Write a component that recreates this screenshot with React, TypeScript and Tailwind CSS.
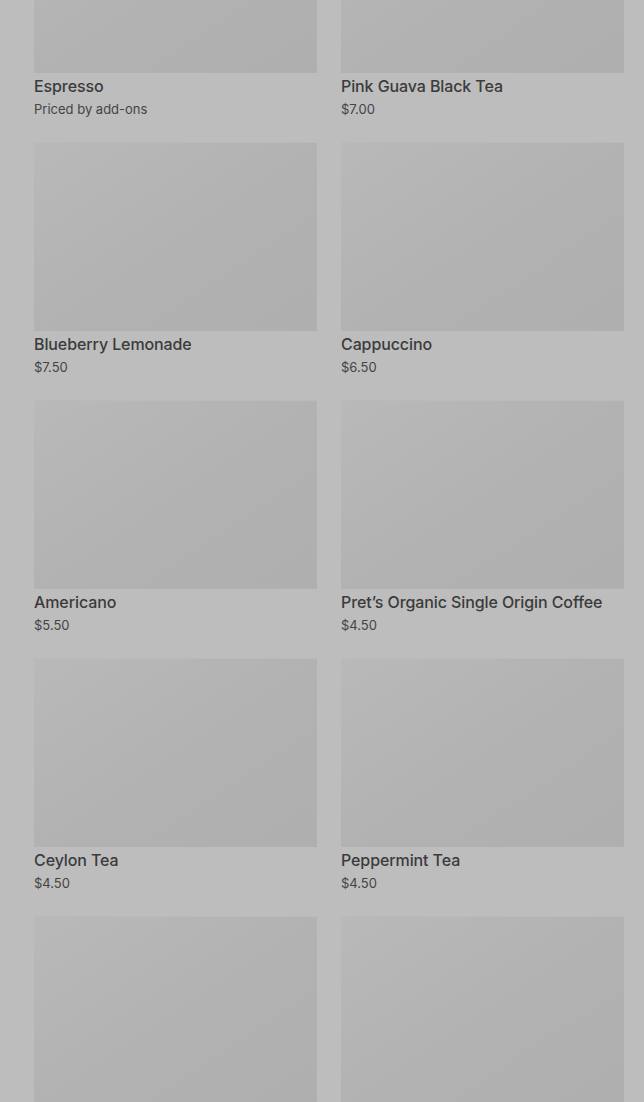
const items = [
  { name: 'Espresso', price: 'Priced by add-ons' },
  { name: 'Pink Guava Black Tea', price: '$7.00' },
  { name: 'Blueberry Lemonade', price: '$7.50' },
  { name: 'Cappuccino', price: '$6.50' },
  { name: 'Americano', price: '$5.50' },
  { name: 'Pret’s Organic Single Origin Coffee', price: '$4.50' },
  { name: 'Ceylon Tea', price: '$4.50' },
  { name: 'Peppermint Tea', price: '$4.50' },
  { name: '', price: '' },
  { name: '', price: '' },
];

export default function App() {
  return (
    <div
      className="h-[1102px] overflow-hidden bg-[#bdbdbd] text-[#3b3b3b]"
      style={{ fontFamily: 'Inter, "Noto Sans", sans-serif' }}
    >
      <div className="-mt-[116px] grid grid-cols-2 gap-x-6 gap-y-[23px] pl-[34px] pr-[20px]">
        {items.map((item, i) => (
          <div key={i}>
            <div className="h-[189px] bg-gradient-to-br from-[#b9b9b9] via-[#b2b2b2] to-[#afafaf] border-t border-[#bababa]" />
            {item.name && (
              <>
                <p className="mt-[1px] text-[16px] leading-[24px] font-medium tracking-[-0.1px]">{item.name}</p>
                <p className="mt-[1px] text-[13px] leading-[20px] text-[#444]">{item.price}</p>
              </>
            )}
          </div>
        ))}
      </div>
    </div>
  );
}
